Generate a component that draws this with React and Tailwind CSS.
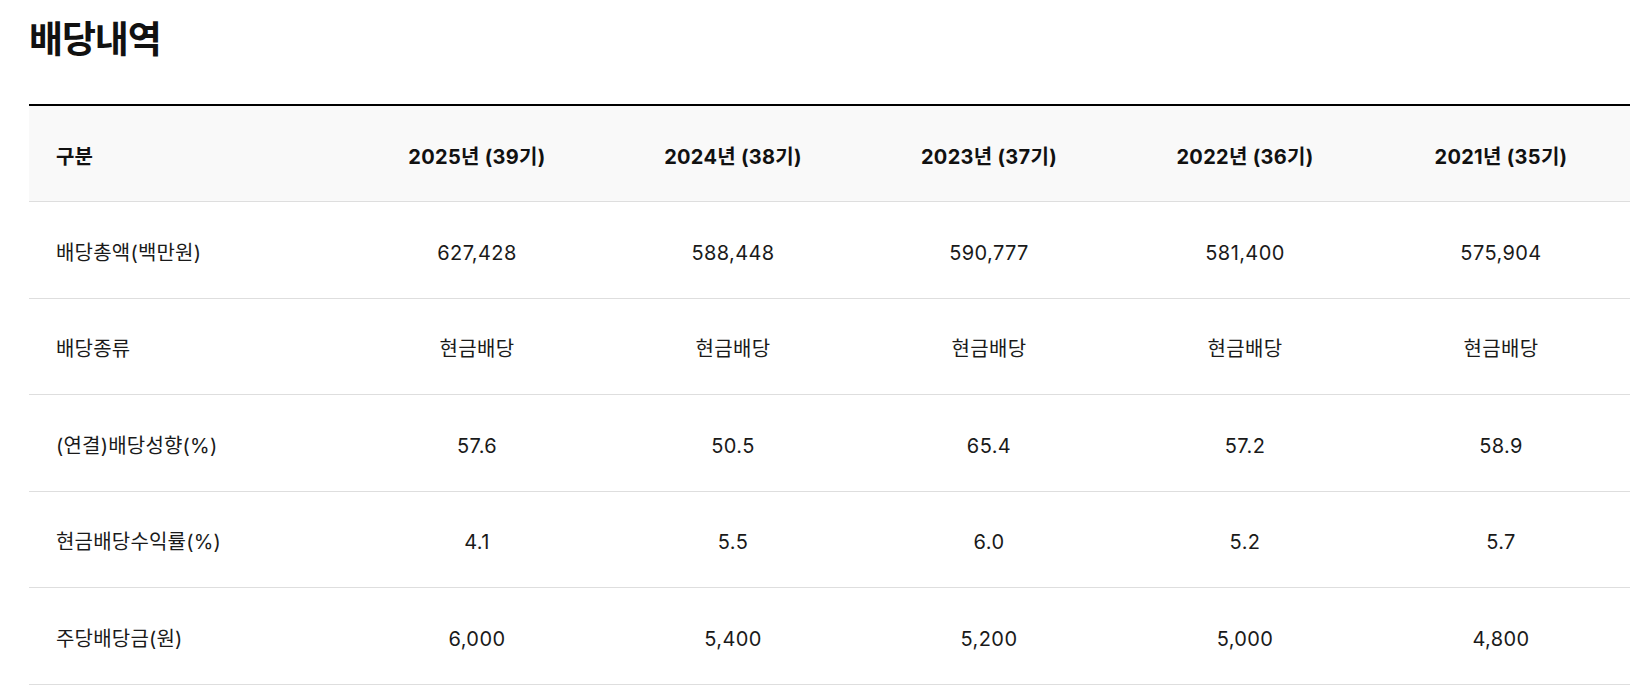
import React from "react";

const years = ["2025년 (39기)", "2024년 (38기)", "2023년 (37기)", "2022년 (36기)", "2021년 (35기)"];

const rows = [
  { label: "배당총액(백만원)", values: ["627,428", "588,448", "590,777", "581,400", "575,904"] },
  { label: "배당종류", values: ["현금배당", "현금배당", "현금배당", "현금배당", "현금배당"] },
  { label: "(연결)배당성향(%)", values: ["57.6", "50.5", "65.4", "57.2", "58.9"] },
  { label: "현금배당수익률(%)", values: ["4.1", "5.5", "6.0", "5.2", "5.7"] },
  { label: "주당배당금(원)", values: ["6,000", "5,400", "5,200", "5,000", "4,800"] },
];

const font = "font-['Inter','Noto_Sans_CJK_KR',sans-serif]";

export default function App() {
  return (
    <div className={`${font} bg-white text-[#111] pl-[29px] pt-[16px] w-[1647px]`}>
      <h2 className="text-[37px] font-bold leading-[48px] tracking-[-0.03em]">배당내역</h2>

      <div className="mt-[40px] w-[1601px] border-t-2 border-black">
        {/* Header */}
        <div className="flex h-[96px] pt-[7px] items-center bg-[#f9f9f9] border-b border-[#dedede] text-[20px] font-bold">
          <div className="w-[320px] pl-[27px]">구분</div>
          {years.map((y) => (
            <div key={y} className="w-[256px] text-center tracking-[0.015em]">
              {y}
            </div>
          ))}
        </div>

        {/* Body */}
        {rows.map((row) => (
          <div
            key={row.label}
            className="flex h-[96.5px] pt-[6px] items-center border-b border-[#dedede] text-[20px] text-[#1a1a1a]"
          >
            <div className="w-[320px] pl-[27px] tracking-[0.01em]">{row.label}</div>
            {row.values.map((v, i) => (
              <div key={i} className="w-[256px] text-center tracking-[0.02em]">
                {v}
              </div>
            ))}
          </div>
        ))}
      </div>
    </div>
  );
}
